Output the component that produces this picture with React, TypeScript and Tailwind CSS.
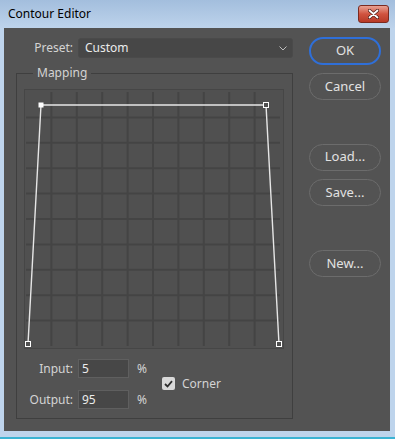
import React from "react";

const font = { fontFamily: '"Noto Sans", "Open Sans", sans-serif' };

function Graph() {
  const step = 25.4;
  const cols = Array.from({ length: 9 }, (_, i) => 6 + step * (i + 1));
  const rows = Array.from({ length: 9 }, (_, i) => 7 + step * (i + 1));
  return (
    <svg width="270" height="270" viewBox="0 0 270 270" className="block">
      <rect x="4.5" y="4.5" width="259" height="259" fill="#505050" stroke="#464646" />
      {cols.map((x) => (
        <line key={"c" + x} x1={x} y1="7" x2={x} y2="261" stroke="#444444" strokeWidth="2" />
      ))}
      {rows.map((y) => (
        <line key={"r" + y} x1="6" y1={y} x2="260" y2={y} stroke="#444444" strokeWidth="2" />
      ))}
      <polyline
        points="8,259 21,20 246,20 259,259"
        fill="none"
        stroke="#e6e6e6"
        strokeWidth="1.4"
      />
      <rect x="18.5" y="17.5" width="5" height="5" fill="#ffffff" />
      <rect x="243.5" y="17.5" width="5" height="5" fill="#505050" stroke="#ffffff" />
      <rect x="5.5" y="256.5" width="5" height="5" fill="#505050" stroke="#ffffff" />
      <rect x="256.5" y="256.5" width="5" height="5" fill="#505050" stroke="#ffffff" />
    </svg>
  );
}

function PillButton({ label, primary }: { label: string; primary?: boolean }) {
  return (
    <button
      className={
        primary
          ? "w-[72px] h-[28px] rounded-full border-2 border-[#2f6fd8] text-[13px] text-[#e2e2e2] bg-[#535353]"
          : "w-[72px] h-[27px] rounded-full border border-[#6c6c6c] text-[13px] text-[#e2e2e2] bg-[#535353]"
      }
    >
      {label}
    </button>
  );
}

function Field({ label, value }: { label: string; value: string }) {
  return (
    <div className="flex items-center h-[19px]">
      <span className="w-[56px] text-right text-[12px] text-[#d4d4d4]">{label}</span>
      <div className="ml-[5px] w-[51px] h-[19px] bg-[#474747] border border-[#5f5f5f] px-[3px] flex items-center text-[12px] text-[#ececec]">
        {value}
      </div>
      <span className="ml-[8px] text-[12px] text-[#d4d4d4]">%</span>
    </div>
  );
}

export default function App() {
  return (
    <div style={font} className="w-[395px] h-[439px] flex flex-col bg-[#bed4ec] overflow-hidden">
      <div className="h-[28px] shrink-0 flex items-center justify-between pl-[8px] pr-[6px] bg-gradient-to-b from-[#a3bedd] to-[#bdd3eb]">
        <span className="text-[12px] text-black">Contour Editor</span>
        <div className="w-[31px] h-[18px] -mt-[1px] rounded-[3px] border border-[#7b2a20] bg-gradient-to-b from-[#e8a193] via-[#d0533f] to-[#b83a27] flex items-center justify-center">
          <svg width="11" height="10" viewBox="0 0 11 10">
            <path d="M1.5 1.5 L9.5 8.5 M9.5 1.5 L1.5 8.5" stroke="#4a1a14" strokeWidth="3.2" strokeLinecap="round" />
            <path d="M1.5 1.5 L9.5 8.5 M9.5 1.5 L1.5 8.5" stroke="#ffffff" strokeWidth="1.8" strokeLinecap="round" />
          </svg>
        </div>
      </div>

      <div className="ml-[4px] mr-[5px] h-[403px] shrink-0 bg-[#535353] flex">
        <div className="ml-[12px] w-[277px] flex flex-col">
          <div className="mt-[10px] h-[20px] flex items-center">
            <span className="w-[57px] text-right text-[12px] text-[#d4d4d4]">Preset:</span>
            <div className="ml-[5px] flex-1 h-[20px] rounded-[3px] bg-[#474747] border border-[#4a4a4a] flex items-center justify-between pl-[6px] pr-[5px]">
              <span className="text-[12px] text-[#ececec]">Custom</span>
              <svg width="8" height="5" viewBox="0 0 8 5">
                <path d="M0.5 0.5 L4 4 L7.5 0.5" fill="none" stroke="#bdbdbd" strokeWidth="1" />
              </svg>
            </div>
          </div>

          <div className="relative mt-[15px] h-[346px] border border-[#3f3f3f]">
            <span className="absolute -top-[9px] left-[16px] px-[4px] bg-[#535353] text-[12px] leading-[16px] text-[#d4d4d4]">
              Mapping
            </span>
            <div className="ml-[3px] mt-[11px]">
              <Graph />
            </div>
            <div className="mt-[4px] flex items-center">
              <div className="flex flex-col gap-[12px]">
                <Field label="Input:" value="5" />
                <Field label="Output:" value="95" />
              </div>
              <div className="ml-[15px] -mt-[1px] flex items-center">
                <div className="w-[13px] h-[13px] rounded-[2px] bg-[#d9d9d9] flex items-center justify-center">
                  <svg width="9" height="8" viewBox="0 0 9 8">
                    <path d="M1 4 L3.5 6.5 L8 1.2" fill="none" stroke="#2e2e2e" strokeWidth="1.8" />
                  </svg>
                </div>
                <span className="ml-[7px] text-[12px] text-[#d4d4d4]">Corner</span>
              </div>
            </div>
          </div>
        </div>

        <div className="ml-[16px] flex flex-col">
          <div className="mt-[9px]">
            <PillButton label="OK" primary />
          </div>
          <div className="mt-[8px]">
            <PillButton label="Cancel" />
          </div>
          <div className="mt-[43px]">
            <PillButton label="Load..." />
          </div>
          <div className="mt-[8px]">
            <PillButton label="Save..." />
          </div>
          <div className="mt-[44px]">
            <PillButton label="New..." />
          </div>
        </div>
      </div>

      <div className="h-[6px] shrink-0" />
      <div className="h-[2px] shrink-0 bg-[#3bb3d3]" />
    </div>
  );
}
